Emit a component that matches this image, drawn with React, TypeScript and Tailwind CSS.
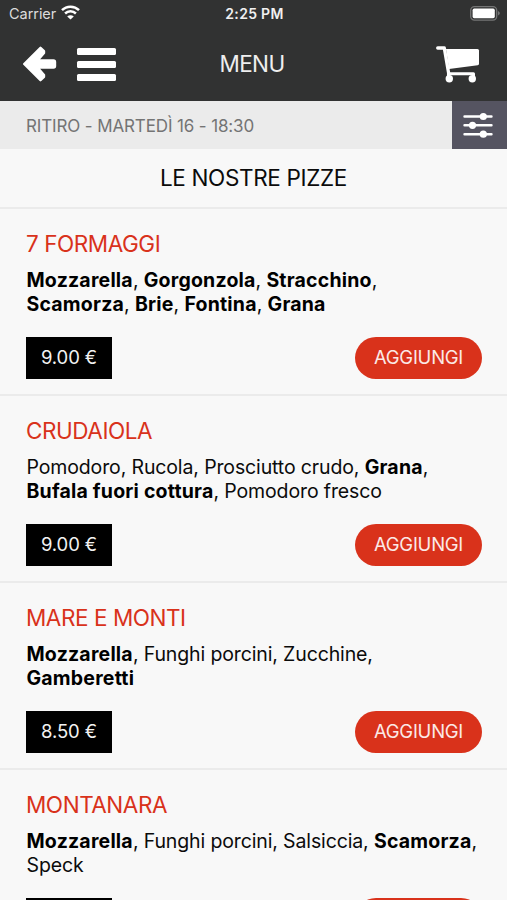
import React from "react";

type Ingredient = { name: string; bold?: boolean };
type Pizza = { name: string; lines: Ingredient[][]; price: string };

const b = (name: string): Ingredient => ({ name, bold: true });
const r = (name: string): Ingredient => ({ name });

const pizzas: Pizza[] = [
  {
    name: "7 FORMAGGI",
    lines: [
      [b("Mozzarella"), b("Gorgonzola"), b("Stracchino")],
      [b("Scamorza"), b("Brie"), b("Fontina"), b("Grana")],
    ],
    price: "9.00 €",
  },
  {
    name: "CRUDAIOLA",
    lines: [
      [r("Pomodoro"), r("Rucola"), r("Prosciutto crudo"), b("Grana")],
      [b("Bufala fuori cottura"), r("Pomodoro fresco")],
    ],
    price: "9.00 €",
  },
  {
    name: "MARE E MONTI",
    lines: [[b("Mozzarella"), r("Funghi porcini"), r("Zucchine")], [b("Gamberetti")]],
    price: "8.50 €",
  },
  {
    name: "MONTANARA",
    lines: [[b("Mozzarella"), r("Funghi porcini"), r("Salsiccia"), b("Scamorza")], [r("Speck")]],
    price: "",
  },
];

function Wifi() {
  return (
    <svg className="ml-[5px] h-[15px] w-[19px] -translate-y-[1px]" viewBox="0 0 19 15" fill="none" stroke="#fff" strokeWidth="2.5">
      <path d="M1 5.2C5.7 .6 13.3 .6 18 5.2" />
      <path d="M4.1 8.5c3-2.9 7.8-2.9 10.8 0" />
      <path d="M6.2 11.400c1.900-1.700 4.700-1.700 6.600 0L9.5 14.6z" fill="#fff" stroke="none" />
    </svg>
  );
}

function Battery() {
  return (
    <svg className="h-[15px] w-[30px] shrink-0" viewBox="0 0 30 15">
      <rect x=".7" y=".7" width="26" height="13.4" rx="3.8" fill="none" stroke="#747575" strokeWidth="1.3" />
      <rect x="2.6" y="2.6" width="22.2" height="9.6" rx="1.6" fill="#fff" />
      <path d="M28 5v4.6c1-.5 1.8-1.3 1.8-2.3S29 5.500 28 5z" fill="#747575" />
    </svg>
  );
}

function BackArrow() {
  return (
    <svg className="h-[36px] w-[34px]" viewBox="0 0 34 36" fill="#fff" stroke="#fff" strokeLinejoin="round">
      <path
        strokeWidth="2.400"
        d="M1.200 18L17.500 1.800 21 5.200V7L14.500 14.500H30.500Q32 14.500 32 16V20Q32 21.500 30.500 21.500H14.500L21 29V30.800L17.500 34.200Z"
      />
    </svg>
  );
}

function Cart() {
  return (
    <svg className="h-[37px] w-[44px]" viewBox="0 0 44 37" fill="#fff">
      <path d="M1.700 2H8.300L12.600 27V30" fill="none" stroke="#fff" strokeWidth="3.300" strokeLinecap="round" strokeLinejoin="round" />
      <path d="M10 3H41.500Q43 3 43 4.500V17.700Q43 19 41.700 19.200L13 23z" />
      <path d="M12.500 27.700H37.500V31" fill="none" stroke="#fff" strokeWidth="3" strokeLinecap="round" strokeLinejoin="round" />
      <circle cx="13.300" cy="32.800" r="3.700" />
      <circle cx="36.300" cy="32.800" r="3.700" />
    </svg>
  );
}

function Sliders() {
  return (
    <svg className="h-[26px] w-[30px]" viewBox="0 0 30 26" fill="#fff" stroke="#fff" strokeWidth="2.400" strokeLinecap="round">
      <path d="M1.500 4.500H28.500M1.500 13.300H28.500M1.500 22.200H28.500" />
      <g stroke="none">
        <circle cx="20.300" cy="4.500" r="3.600" />
        <circle cx="9.500" cy="13.300" r="3.600" />
        <circle cx="20.300" cy="22.200" r="3.600" />
      </g>
    </svg>
  );
}

function PizzaItem({ pizza }: { pizza: Pizza }) {
  return (
    <article className="h-[187px] shrink-0 border-t-2 border-[#ebebeb] pl-[26px] pr-[25px] pt-[21px]">
      <h3 className="text-[22.5px] leading-[28px] tracking-[-0.45px] text-[#d9321b]">{pizza.name}</h3>
      <div className="mt-[10px] pl-[0.5px] text-[19.5px] leading-[24px] tracking-[-0.13px] text-[#0b0b0b]">
        {pizza.lines.map((line, i) => (
          <p key={i} className="whitespace-nowrap">
            {line.map((item, j) => (
              <React.Fragment key={item.name}>
                <span className={item.bold ? "font-bold tracking-[0.2px] text-black" : ""}>{item.name}</span>
                {j < line.length - 1 ? ", " : i < pizza.lines.length - 1 ? "," : ""}
              </React.Fragment>
            ))}
          </p>
        ))}
      </div>
      <div className="mt-[21px] flex items-center justify-between">
        <span className="flex h-[42px] w-[86px] items-center justify-center bg-black text-[18.5px] tracking-[-0.1px] text-[#f2f2f2]">
          {pizza.price}
        </span>
        <button className="flex h-[42px] w-[127px] items-center justify-center rounded-full bg-[#d9321b] text-[18.5px] tracking-[-0.25px] text-[#fbe9e6]">
          {pizza.price && "AGGIUNGI"}
        </button>
      </div>
    </article>
  );
}

export default function App() {
  return (
    <div className="flex h-[900px] w-[507px] flex-col overflow-hidden bg-[#f8f8f8] font-['Inter','Liberation_Sans',sans-serif]">
      <header className="h-[101px] shrink-0 bg-[#313232] text-white">
        <div className="grid h-[27px] grid-cols-3 items-center pl-[9px] pr-[7px]">
          <div className="flex items-center text-[14.5px] tracking-[-0.05px] text-[#dcdcdc]">
            Carrier
            <Wifi />
          </div>
          <span className="text-center text-[14px] font-semibold tracking-[0.3px] text-[#f0f0f0]">2:25 PM</span>
          <div className="flex justify-end">
            <Battery />
          </div>
        </div>
        <nav className="grid h-[74px] grid-cols-3 items-center pl-[23px] pr-[27px]">
          <div className="flex items-center gap-[20px]">
            <BackArrow />
            <div className="flex flex-col gap-[6px]">
              <span className="h-[7px] w-[39px] rounded-[1.5px] bg-white" />
              <span className="h-[7px] w-[39px] rounded-[1.5px] bg-white" />
              <span className="h-[7px] w-[39px] rounded-[1.5px] bg-white" />
            </div>
          </div>
          <h1 className="pl-[1px] text-center text-[22.5px] tracking-[-0.6px] text-[#eeeeee]">MENU</h1>
          <div className="flex justify-end">
            <Cart />
          </div>
        </nav>
      </header>
      <div className="flex h-[48px] shrink-0 items-center justify-between bg-[#ebebeb] pl-[26px]">
        <span className="pt-[3px] text-[17px] tracking-[-0.13px] text-[#747474]">RITIRO - MARTEDÌ 16 - 18:30</span>
        <button className="flex h-[48px] w-[55px] items-center justify-center bg-[#555461] pr-[3px]">
          <Sliders />
        </button>
      </div>
      <h2 className="flex h-[58px] shrink-0 items-center justify-center text-[22.5px] tracking-[-0.35px] text-[#0b0b0b]">
        LE NOSTRE PIZZE
      </h2>
      <main className="flex flex-col">
        {pizzas.map((pizza) => (
          <PizzaItem key={pizza.name} pizza={pizza} />
        ))}
      </main>
    </div>
  );
}
